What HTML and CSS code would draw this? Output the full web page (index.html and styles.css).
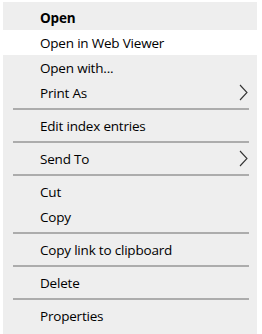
FILE: index.html
```html
<!DOCTYPE html>
<html lang="en">
<head>
    <meta charset="UTF-8">
    <title>Context Menu</title>
    <link rel="stylesheet" href="styles.css">
</head>
<body>
    <div class="menu">
        <div class="item default">Open</div>
        <div class="item hover">Open in Web Viewer</div>
        <div class="item">Open with...</div>
        <div class="item">Print As
            <svg class="arrow" width="9" height="17" viewBox="0 0 9 17"><path d="M1 1 L8 8.5 L1 16" fill="none" stroke="#333" stroke-width="1.1"/></svg>
        </div>
        <div class="separator"></div>
        <div class="item">Edit index entries</div>
        <div class="separator"></div>
        <div class="item">Send To
            <svg class="arrow" width="9" height="17" viewBox="0 0 9 17"><path d="M1 1 L8 8.5 L1 16" fill="none" stroke="#333" stroke-width="1.1"/></svg>
        </div>
        <div class="separator"></div>
        <div class="item">Cut</div>
        <div class="item">Copy</div>
        <div class="separator"></div>
        <div class="item">Copy link to clipboard</div>
        <div class="separator"></div>
        <div class="item">Delete</div>
        <div class="separator"></div>
        <div class="item">Properties</div>
    </div>
</body>
</html>
```

FILE: styles.css
```css
body {
    margin: 0;
    background-color: white;
    font-family: "Open Sans", "Noto Sans", sans-serif;
    font-size: 13.5px;
    letter-spacing: -0.2px;
    color: #000;
}
.menu {
    margin: 2px 5px 0 3px;
    padding: 3px 0 6px 0;
    background-color: #eeeeee;
}
.item {
    display: flex;
    align-items: center;
    height: 25px;
    padding-left: 37px;
    padding-right: 9px;
}
.item.default {
    font-weight: bold;
}
.item.hover {
    background-color: white;
}
.arrow {
    margin-left: auto;
}
.separator {
    height: 2px;
    margin: 3px 8px 3px 10px;
    background-color: #acacac;
}
```
